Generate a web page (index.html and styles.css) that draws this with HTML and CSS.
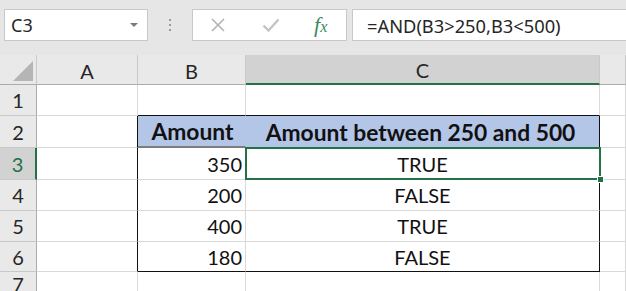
FILE: index.html
```html
<!DOCTYPE html>
<html lang="en">
<head>
    <meta charset="UTF-8">
    <title>AND formula</title>
    <link rel="stylesheet" href="styles.css">
</head>
<body>
    <div class="toolbar">
        <div class="name-box">
            <span>C3</span>
            <span class="arrow"></span>
        </div>
        <div class="dots"><i></i><i></i><i></i></div>
        <div class="fx-buttons">
            <svg class="ico" width="16" height="16" viewBox="0 0 16 16"><path d="M2 2 L14 14 M14 2 L2 14" stroke="#b3b3b3" stroke-width="1.6" fill="none"/></svg>
            <svg class="ico" width="18" height="16" viewBox="0 0 18 16"><path d="M1.5 8.5 L6.5 13.5 L16.5 2.5" stroke="#c4c4c4" stroke-width="2.4" fill="none"/></svg>
            <span class="fx">f<sub>x</sub></span>
        </div>
        <div class="formula">=AND(B3&gt;250,B3&lt;500)</div>
    </div>

    <div class="sheet">
        <!-- column headers -->
        <div class="hd corner"><span class="tri"></span></div>
        <div class="hd">A</div>
        <div class="hd">B</div>
        <div class="hd sel-col">C</div>
        <div class="hd"></div>

        <!-- row 1 -->
        <div class="rh">1</div>
        <div class="c"></div>
        <div class="c tb-top"></div>
        <div class="c tb-top"></div>
        <div class="c"></div>

        <!-- row 2 -->
        <div class="rh">2</div>
        <div class="c tb-left"></div>
        <div class="c head head-b">Amount</div>
        <div class="c head head-c tb-right">Amount between 250 and 500</div>
        <div class="c"></div>

        <!-- row 3 -->
        <div class="rh sel-row">3</div>
        <div class="c tb-left"></div>
        <div class="c num">350</div>
        <div class="c mid tb-right active">TRUE<span class="handle"></span></div>
        <div class="c"></div>

        <!-- row 4 -->
        <div class="rh">4</div>
        <div class="c tb-left"></div>
        <div class="c num">200</div>
        <div class="c mid tb-right">FALSE</div>
        <div class="c"></div>

        <!-- row 5 -->
        <div class="rh">5</div>
        <div class="c tb-left"></div>
        <div class="c num">400</div>
        <div class="c mid tb-right">TRUE</div>
        <div class="c"></div>

        <!-- row 6 -->
        <div class="rh">6</div>
        <div class="c tb-left"></div>
        <div class="c num tb-bottom">180</div>
        <div class="c mid tb-right tb-bottom">FALSE</div>
        <div class="c"></div>

        <!-- row 7 -->
        <div class="rh">7</div>
        <div class="c"></div>
        <div class="c"></div>
        <div class="c"></div>
        <div class="c"></div>
    </div>
</body>
</html>
```

FILE: styles.css
```css
body {
    margin: 0;
    width: 626px;
    height: 291px;
    overflow: hidden;
    background: #e6e6e6;
    font-family: "Lato", "Open Sans", sans-serif;
}

/* formula bar */
.toolbar {
    height: 55px;
    display: flex;
    align-items: flex-start;
    padding-top: 9px;
    box-sizing: border-box;
    font-family: "Noto Sans", sans-serif;
    color: #262626;
}

.name-box {
    margin-left: 4px;
    width: 144px;
    height: 32px;
    box-sizing: border-box;
    background: white;
    border: 1px solid #c8c8c8;
    display: flex;
    align-items: center;
    justify-content: space-between;
    padding: 0 9px 0 6px;
    font-size: 18px;
}

.arrow {
    width: 0;
    height: 0;
    border-left: 4px solid transparent;
    border-right: 4px solid transparent;
    border-top: 4px solid #7a7a7a;
}

.dots {
    width: 44px;
    height: 32px;
    display: flex;
    flex-direction: column;
    align-items: center;
    justify-content: center;
    gap: 3px;
}

.dots i {
    width: 2px;
    height: 2px;
    background: #9a9a9a;
}

.fx-buttons {
    width: 155px;
    height: 32px;
    box-sizing: border-box;
    background: white;
    border: 1px solid #c8c8c8;
    display: flex;
    align-items: center;
    padding-left: 17px;
}

.fx-buttons .ico:first-child {
    margin-right: 36px;
}

.fx {
    margin-left: 34px;
    font-family: "Liberation Serif", serif;
    font-style: italic;
    font-size: 22px;
    color: #3a8a5c;
}

.fx sub {
    font-size: 16px;
    vertical-align: baseline;
}

.formula {
    margin-left: 5px;
    flex: 1;
    height: 32px;
    box-sizing: border-box;
    background: white;
    border: 1px solid #c8c8c8;
    border-right: none;
    padding-left: 14px;
    display: flex;
    align-items: center;
    font-size: 18.3px;
}

/* grid */
.sheet {
    display: grid;
    grid-template-columns: 37px 101px 108px 354px 1fr;
    grid-template-rows: 30px 31px 32px 32px 31px 31px 30px 1fr;
    height: 236px;
    background: white;
}

.sheet > div {
    box-sizing: border-box;
    display: flex;
    align-items: center;
}

.hd {
    background: #e9e9e9;
    border-right: 1px solid #c9c9c9;
    border-bottom: 1px solid #ababab;
    justify-content: center;
    font-size: 20px;
    color: #262626;
    padding-top: 2px;
}

.corner {
    position: relative;
}

.tri {
    position: absolute;
    right: 3px;
    bottom: 3px;
    width: 0;
    height: 0;
    border-left: 20px solid transparent;
    border-bottom: 20px solid #b5b5b5;
}

.sel-col {
    background: #d2d2d2;
    border-bottom: 2px solid #217346;
}

.rh {
    background: #e9e9e9;
    border-right: 1px solid #ababab;
    border-bottom: 1px solid #c9c9c9;
    justify-content: center;
    font-size: 20px;
    color: #262626;
}

.sel-row {
    background: #d2d2d2;
    color: #217346;
    border-right: 2px solid #217346;
}

.c {
    border-right: 1px solid #d9d9d9;
    border-bottom: 1px solid #d9d9d9;
    font-size: 20px;
    color: #111;
}

.tb-top { border-bottom-color: #111; }
.tb-left { border-right-color: #111; }
.tb-right { border-right-color: #111; }
.tb-bottom { border-bottom-color: #111; }

.head {
    background: #b4c6e7;
    font-weight: bold;
    font-size: 22.8px;
    justify-content: center;
}

.head-b {
    border-right-color: #b4c6e7;
    border-bottom: 2px solid #7d7d7d;
    padding-left: 2px;
}

.head-c {
    border-bottom-color: #b4c6e7;
    padding-right: 4px;
}

.num {
    justify-content: flex-end;
    padding-right: 3px;
}

.mid {
    justify-content: center;
}

.active {
    position: relative;
}

.active::after {
    content: "";
    position: absolute;
    left: -1px;
    top: -1px;
    right: -2px;
    bottom: -1px;
    border: 2px solid #217346;
}

.handle {
    position: absolute;
    right: -5px;
    bottom: -4px;
    width: 5px;
    height: 5px;
    background: #217346;
    border: 1px solid white;
    z-index: 1;
}
```
